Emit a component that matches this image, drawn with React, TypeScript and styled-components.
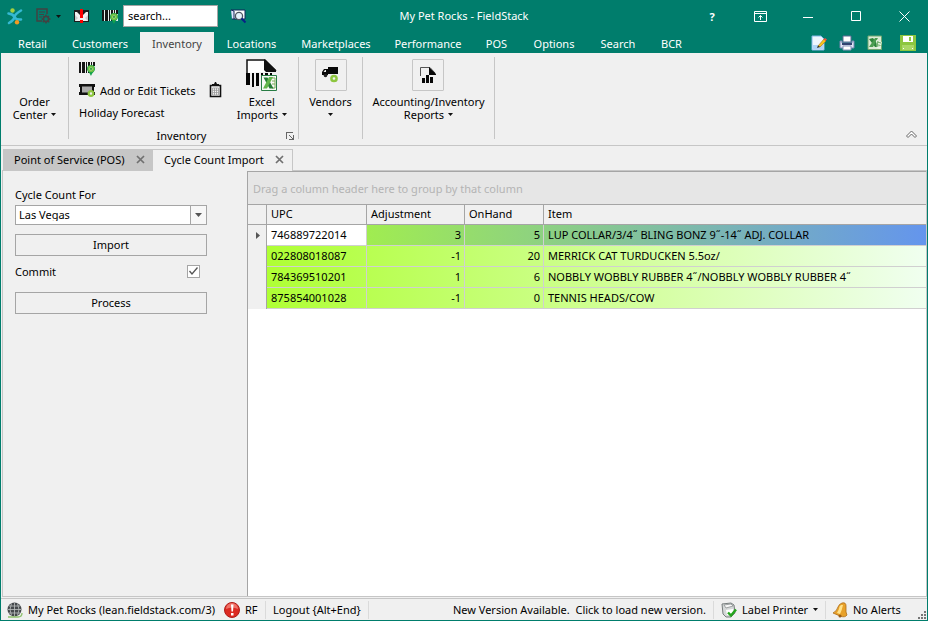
import React from "react";
import styled, { createGlobalStyle, css } from "styled-components";

const teal = "#007d6c";
const face = "#f0f0f0";
const line = "#c6c6c6";
const edge = "#a5a5a5";

const GlobalStyle = createGlobalStyle`
  * { box-sizing: border-box; }
  body { margin: 0; }
  body, button, input, select {
    font-family: "Noto Sans", "Open Sans", sans-serif;
    font-size: 11px;
    line-height: 13px;
    color: #000;
  }
  button { margin: 0; padding: 0; border: 0; background: none; }
  svg { display: block; flex: none; }
`;

const Window = styled.div`
  display: flex;
  flex-direction: column;
  min-height: 100vh;
  background: ${face};
  border: 1px solid ${teal};
  border-top: 0;
`;

const TitleBar = styled.header`
  display: grid;
  grid-template-columns: 1fr auto 1fr;
  align-items: center;
  height: 32px;
  margin: 0 -1px;
  background: ${teal};
  color: #fff;
`;

const QuickAccess = styled.div`
  display: flex;
  align-items: center;
  padding-left: 7px;
`;

const ToolButton = styled.button<{ $gap?: number }>`
  display: flex;
  align-items: center;
  gap: 5px;
  margin-right: ${(p) => p.$gap ?? 0}px;
`;

const SearchBox = styled.input`
  width: 95px;
  height: 22px;
  margin-right: 12px;
  padding: 0 4px 1px;
  border: 1px solid ${edge};
  border-radius: 0;
  background: #fff;
  outline: 0;
  &::placeholder { color: #000; opacity: 1; }
`;

const Title = styled.h1`
  margin: 0;
  padding-bottom: 2px;
  font-size: 11px;
  font-weight: 400;
`;

const WindowButtons = styled.div`
  display: flex;
  justify-content: flex-end;
`;

const WindowButton = styled.button`
  display: flex;
  align-items: center;
  justify-content: center;
  width: 48px;
  height: 32px;
  color: #fff;
  font-weight: 700;
`;

const MenuBar = styled.nav`
  display: flex;
  height: 21px;
  margin: 0 -1px;
  padding: 0 12px 0 5px;
  background: ${teal};
`;

const MenuTab = styled.button<{ $width: number; $active?: boolean }>`
  width: ${(p) => p.$width}px;
  flex: none;
  padding-top: 2px;
  white-space: nowrap;
  color: ${(p) => (p.$active ? "#444" : "#fff")};
  background: ${(p) => (p.$active ? face : "transparent")};
`;

const MenuTools = styled.div`
  display: flex;
  align-items: center;
  gap: 12px;
  margin-left: auto;
  button:last-child { margin-left: 5px; }
`;

const Ribbon = styled.section`
  display: flex;
  align-items: stretch;
  height: 93px;
  padding: 4px 0 6px;
  border-bottom: 1px solid ${line};
`;

const Group = styled.div<{ $width: number }>`
  display: flex;
  justify-content: center;
  width: ${(p) => p.$width}px;
  border-right: 1px solid ${line};
`;

const InventoryGroup = styled(Group)`
  flex-direction: column;
  justify-content: space-between;
`;

const GroupBody = styled.div`
  display: flex;
  padding: 0 11px 0 10px;
`;

const CommandList = styled.div`
  display: flex;
  flex-direction: column;
  width: 130px;
`;

const Command = styled.button`
  display: flex;
  align-items: center;
  gap: 5px;
  height: 22px;
  white-space: nowrap;
`;

const ClipButton = styled.button`
  align-self: flex-start;
  margin-top: 25px;
`;

const GroupFooter = styled.div`
  display: grid;
  grid-template-columns: 1fr auto 1fr;
  align-items: center;
  height: 10px;
  padding-right: 4px;
  button { justify-self: end; }
`;

const BigButton = styled.button<{ $push?: boolean }>`
  display: flex;
  flex-direction: column;
  align-items: center;
  justify-content: flex-start;
  white-space: nowrap;
  ${(p) => p.$push && css`margin-left: auto;`}
`;

const IconSlot = styled.span<{ $framed?: boolean }>`
  display: flex;
  align-items: center;
  justify-content: center;
  width: 32px;
  height: 32px;
  margin: 2px 0 4px;
  border: ${(p) => (p.$framed ? `1px solid ${line}` : "0")};
  border-radius: 1px;
`;

const WithCaret = styled.span`
  display: flex;
  align-items: center;
  justify-content: center;
  gap: 4px;
  min-height: 13px;
`;

const Collapse = styled.button`
  align-self: flex-end;
  margin: 0 9px 0 auto;
`;

const DocTabs = styled.div`
  display: flex;
  height: 24px;
  padding: 3px 0 0 2px;
`;

const DocTab = styled.div<{ $active?: boolean; $width: number }>`
  display: flex;
  align-items: center;
  justify-content: space-between;
  width: ${(p) => p.$width}px;
  padding: 0 7px 1px 10px;
  white-space: nowrap;
  border: 1px solid ${line};
  border-bottom: 0;
  background: ${(p) => (p.$active ? face : line)};
  ${(p) => p.$active && css`
    border-left: 0;
    margin-bottom: -1px;
    padding: 0 8px 2px 11px;
    z-index: 1;
  `}
`;

const Workspace = styled.main`
  display: flex;
  flex: 1;
  margin: 0 0 1px 1px;
  border: 1px solid ${line};
`;

const Form = styled.form`
  display: flex;
  flex-direction: column;
  width: 244px;
  padding: 17px 40px 0 12px;
`;

const FieldLabel = styled.label`
  line-height: 13px;
`;

const SelectWrap = styled.div`
  display: grid;
  grid-template-columns: 1fr 16px;
  height: 20px;
  margin: 4px 0 9px;
  border: 1px solid ${edge};
`;

const Select = styled.select`
  grid-area: 1 / 1 / 2 / 3;
  width: 100%;
  appearance: none;
  border: 0;
  border-radius: 0;
  outline: 0;
  padding: 0 20px 2px 3px;
  background: #fff;
`;

const SelectArrow = styled.span`
  grid-area: 1 / 2;
  display: flex;
  align-items: center;
  justify-content: center;
  border-left: 1px solid ${edge};
  background: #f7f7f7;
  pointer-events: none;
`;

const FormButton = styled.button`
  height: 22px;
  padding-bottom: 2px;
  border: 1px solid ${edge};
  background: ${face};
`;

const CheckRow = styled.div`
  display: flex;
  align-items: center;
  justify-content: space-between;
  height: 36px;
  padding: 0 7px 6px 0;
`;

const CheckWrap = styled.span`
  display: grid;
  width: 13px;
  height: 13px;
  place-items: center;
  svg { grid-area: 1 / 1; pointer-events: none; }
`;

const CheckBox = styled.input`
  grid-area: 1 / 1;
  appearance: none;
  width: 13px;
  height: 13px;
  margin: 0;
  border: 1px solid ${edge};
  background: #fff;
`;

const GridPanel = styled.section`
  flex: 1;
  min-width: 0;
  border-top: 1px solid ${edge};
  border-left: 1px solid ${edge};
  background: #fff;
`;

const GroupDrop = styled.div`
  height: 33px;
  padding: 10px 5px;
  border-bottom: 1px solid ${edge};
  background: #e6e6e6;
  color: #b4b4b4;
`;

const Table = styled.table`
  width: 100%;
  table-layout: fixed;
  border-collapse: separate;
  border-spacing: 0;
`;

const Head = styled.th<{ $width?: number }>`
  ${(p) => p.$width && css`width: ${p.$width}px;`}
  height: 20px;
  padding: 0 4px 2px;
  text-align: left;
  font-weight: 400;
  background: ${face};
  border-bottom: 1px solid ${edge};
  border-right: 1px solid ${edge};
  &:last-child { border-right: 0; }
`;

const Row = styled.tr<{ $selected?: boolean }>`
  background: linear-gradient(to right, #adff2f, ${(p) => (p.$selected ? "#6495ed" : "#f0fff0")});
`;

const Cell = styled.td<{ $right?: boolean; $focused?: boolean }>`
  height: 21px;
  padding: 0 3px 2px 4px;
  white-space: nowrap;
  text-align: ${(p) => (p.$right ? "right" : "left")};
  border-bottom: 1px solid #d0d0d0;
  border-right: 1px solid #d0d0d0;
  ${(p) => p.$focused && css`background: #fff;`}
  &:last-child { border-right: 0; }
`;

const Marker = styled.td`
  height: 21px;
  padding: 0 7px 0 8px;
  background: ${face};
  border-right: 1px solid ${edge};
`;

const StatusBar = styled.footer`
  display: flex;
  align-items: center;
  height: 22px;
  border-top: 1px solid ${line};
  white-space: nowrap;
`;

const StatusItem = styled.button<{ $width?: number; $ruled?: boolean; $end?: boolean }>`
  display: flex;
  align-items: center;
  gap: 5px;
  height: 18px;
  padding: 0 7px;
  ${(p) => p.$width && css`width: ${p.$width}px;`}
  ${(p) => p.$ruled && css`border-right: 1px solid #dadada;`}
  ${(p) => p.$end && css`margin-left: auto;`}
`;

const SiteItem = styled(StatusItem)`
  padding: 0 0 0 6px;
`;

const Grip = styled.span`
  align-self: flex-end;
  margin: 0 1px 1px 0;
`;

const Caret = ({ color = "#111", size = 5 }: { color?: string; size?: number }) => (
  <svg width={size} height={size > 5 ? 4 : 3} viewBox="0 0 5 3" preserveAspectRatio="none" aria-hidden="true">
    <path d="M0 0h5L2.5 3z" fill={color} />
  </svg>
);

const Cross = () => (
  <svg width="9" height="9" viewBox="0 0 9 9" aria-hidden="true">
    <path d="M1 1l7 7M8 1l-7 7" stroke="#707070" strokeWidth="1.7" />
  </svg>
);

const Logo = () => (
  <svg width="16" height="17" viewBox="0 0 16 17">
    <path d="M14 2.500Q8 6 7.500 9T2 15M1.500 5.500Q6 6 7.500 9T14 11.500" stroke="#35b9d3" strokeWidth="2.600" fill="none" strokeLinecap="round" />
    <circle cx="5.500" cy="2.500" r="2.200" fill="#a4cf3f" />
    <circle cx="10" cy="14.300" r="2.200" fill="#f39a21" />
  </svg>
);

const DocGear = () => (
  <svg width="15" height="16" viewBox="0 0 15 16">
    <path d="M11 6V1H1v12h5" fill="none" stroke="#424242" strokeWidth="1.5" />
    <path d="M3 4h6M3 6.5h5M3 9h3" stroke="#424242" strokeWidth="1.2" />
    <circle cx="10" cy="11" r="2.6" fill="none" stroke="#424242" strokeWidth="1.7" />
    <path d="M10 6.5v2M10 13.5v2M5.500 11h2M12.500 11h2M7 8l1.200 1.200M12 13l1.200 1.200M13 8l-1.200 1.200M8 13l-1.200 1.200" stroke="#424242" strokeWidth="1.500" />
  </svg>
);

const Mail = () => (
  <svg width="16" height="14" viewBox="0 0 16 14">
    <path d="M0 1h15v12H0z" fill="#1c1c1c" />
    <path d="M1 3h2l4 4h1l4-4h2v9H1z" fill="#f1f1f1" />
    <path d="M1 12V6l3 3zM14 12V6l-3 3z" fill="#c9cfce" />
    <path d="M6 0h3v9H6zM6 11h3v3H6z" fill="#f00" />
  </svg>
);

const BarcodePin = ({ back = "none" }: { back?: string }) => (
  <svg width="16" height="16" viewBox="0 0 16 16">
    <path d="M0 2h16v11H0z" fill={back} />
    <path d="M0 2h2v11H0zM3 2h3v11H3zM7 2h1v11H7zM9 2h2v11H9zM12 2h1v4h-1zM14 2h2v4h-2z" fill="#151515" />
    <path d="M8 9a4 4 0 0 1 8 0c0 2.500-2.500 3-4 7-1.500-4-4-4.500-4-7z" fill="#12a24a" />
    <circle cx="12" cy="8.800" r="2.500" fill="#dff0c8" stroke="#6fc043" strokeWidth="1.800" />
    <circle cx="12" cy="8.800" r="1.300" fill="#3fa544" />
  </svg>
);

const FindRecord = () => (
  <svg width="17" height="16" viewBox="0 0 17 16">
    <path d="M1 2h14v9H4z" fill="#fff" stroke="#13265b" />
    <path d="M1 2l3 1v8H2" fill="#dce5ff" stroke="#13265b" />
    <circle cx="9" cy="8" r="3.600" fill="#e4f2fc" stroke="#4d5561" strokeWidth="1.300" />
    <path d="M11.500 10.500l4 4" stroke="#081f87" strokeWidth="2" />
  </svg>
);

const EditPage = () => (
  <svg width="16" height="16" viewBox="0 0 16 16">
    <path d="M1 1h9l3 3v11H1z" fill="#edf6ff" stroke="#83b7e8" />
    <path d="M2 10h10v4H2z" fill="#aed4f8" />
    <path d="M7 11l6-7 2 2-6 6z" fill="#f9c51c" stroke="#a66e16" strokeWidth=".6" />
    <path d="M12.500 4.500L14 3l2 1.500L14.500 6z" fill="#ee5140" />
    <path d="M6 13l1-2.500L9 12z" fill="#302b20" />
  </svg>
);

const PrinterIcon = () => (
  <svg width="16" height="16" viewBox="0 0 16 16">
    <path d="M4 1h8v6H4z" fill="#fff" stroke="#5c6b93" />
    <path d="M1 6h2v2h10V6h2v7H1z" fill="#dfe3f3" stroke="#7684b1" />
    <path d="M3 8h10v2H3z" fill="#334371" />
    <path d="M4 11h8v4H4z" fill="#fff" stroke="#8a94bb" />
  </svg>
);

const SheetIcon = () => (
  <svg width="16" height="16" viewBox="0 0 16 16">
    <path d="M1 1h13.500v13.500H1z" fill="#dcebd6" stroke="#6ea86e" />
    <path d="M2 4l4-1 7 9H8z" fill="#2c853a" />
    <path d="M11 3H8L2 12h4z" fill="#4b9d50" />
    <path d="M9 5l6 2-2 7-3-1z" fill="#eef7ea" opacity=".8" />
    <path d="M10 7l4 1M9.500 9.500l4 1M11 6l-1 6" stroke="#6eaf68" />
  </svg>
);

const Floppy = () => (
  <svg width="16" height="16" viewBox="0 0 16 16" shapeRendering="crispEdges">
    <path d="M0 0h15l1 1v15H0z" fill="#8cc63f" />
    <path d="M3 1h10v6H3z" fill="#fff" />
    <path d="M9 2h2v4H9z" fill="#8cc63f" />
    <path d="M2 10h12v5H2z" fill="#a9d765" />
    <path d="M3 13h1v1H3zM12 13h1v1h-1z" fill="#fff" />
  </svg>
);

const TicketIcon = () => (
  <svg width="16" height="14" viewBox="0 0 16 14">
    <path d="M0 1h16v3h-1v5h1v3H0V9h1V4H0z" fill="#111" />
    <path d="M3 3.500h10v6H3z" fill="#aaa" />
    <circle cx="12" cy="10.500" r="2.300" fill="#efefef" stroke="#8dc63f" strokeWidth="2.200" />
  </svg>
);

const Clipboard = () => (
  <svg width="13" height="16" viewBox="0 0 13 16">
    <path d="M1.500 3.500h10v11h-10z" fill="#f6f6f6" stroke="#111" strokeWidth="1.600" />
    <path d="M3 2h2l1-2h1l1 2h2v2H3z" fill="#111" />
    <path d="M3.500 6h6v7h-6zM5.500 6v7M7.500 6v7M3.500 8.300h6M3.500 10.600h6" fill="none" stroke="#999" strokeWidth=".8" />
  </svg>
);

const ExcelBarcode = () => (
  <svg width="32" height="32" viewBox="0 0 32 32">
    <path d="M1 14V1h18l11 11" fill="#fff" stroke="#111" strokeWidth="1.500" />
    <path d="M18 0l12 11v2H20l-2-2z" fill="#111" />
    <path d="M0 14h4v12H0zM6 14h2v14H6zM10 14h3v13h-3zM15 14h2v3h-2z" fill="#050505" />
    <path d="M19 14h3v2h-3zM24 14h2v2h-2z" fill="#050505" />
    <path d="M15.500 16.500h15v15h-15z" fill="#f8faf6" stroke="#277c43" />
    <path d="M26 19h3v10h-3M26 22h3M26 25h3" fill="none" stroke="#7bad59" />
    <path d="M17.500 18.500h4l6 11h-4z" fill="#247b34" />
    <path d="M27 18h-4l-6 11.500h4z" fill="#62b54a" />
  </svg>
);

const Truck = () => (
  <svg width="17" height="16" viewBox="0 0 17 16">
    <path d="M6 0h10v7H6zM0 5l2-3h4v6H0z" fill="#080808" />
    <path d="M1.500 5L3 3h1v2z" fill="#eee" />
    <circle cx="3.500" cy="8.500" r="1.800" fill="#222" />
    <circle cx="12" cy="11.500" r="2.600" fill="#f3f3f3" stroke="#8dc63f" strokeWidth="2.500" />
  </svg>
);

const ReportIcon = () => (
  <svg width="16" height="17" viewBox="0 0 16 17">
    <path d="M.5 9V.5H10L15 6" fill="none" stroke="#555" />
    <path d="M9 0l7 7v1H9z" fill="#080808" />
    <path d="M2 11h3v5H2zM6 8h3v8H6zM10 10h3v6h-3z" fill="#080808" />
  </svg>
);

const Launcher = () => (
  <svg width="8" height="8" viewBox="0 0 8 8" shapeRendering="crispEdges">
    <path d="M.5 7V.5H7M3 3l4 4M7.500 3v4.500H3" fill="none" stroke="#666" />
  </svg>
);

const Globe = () => (
  <svg width="16" height="16" viewBox="0 0 16 16">
    <circle cx="7.500" cy="7.500" r="7" fill="#45494c" />
    <path d="M1 7.500h13M2 4h11M2 11h11M7.500 1v13M4.500 1.500q-3 6 0 12M10.500 1.500q3 6 0 12" stroke="#bcc0c0" fill="none" strokeWidth=".8" />
    <path d="M1 15h10q4 0 4-4" fill="none" stroke="#8dc06b" strokeWidth="1.300" />
  </svg>
);

const AlertIcon = () => (
  <svg width="16" height="16" viewBox="0 0 16 16">
    <circle cx="8" cy="8" r="7.500" fill="#dc2b22" stroke="#ae1d19" />
    <path d="M2 7a6 6 0 0 1 12 0q-6-3-12 0z" fill="#ef7268" />
    <path d="M7 2.500h2.500L9 9.500H7.500zM7 11h2.500v2.500H7z" fill="#fff" />
  </svg>
);

const LabelPrinterIcon = () => (
  <svg width="16" height="16" viewBox="0 0 16 16">
    <path d="M1 2l9-1 3 2 1 8-4 4H5L2 12z" fill="#d5d8d8" stroke="#777d7d" />
    <path d="M3 3l7-1 2 2-7 2z" fill="#f8f8f8" stroke="#8b9191" strokeWidth=".8" />
    <path d="M5 8l7-1v6H6z" fill="#fff" />
    <path d="M7 10.500l3 3 5-6" fill="none" stroke="#24a51d" strokeWidth="2.400" />
  </svg>
);

const Bell = () => (
  <svg width="15" height="16" viewBox="0 0 15 16">
    <path d="M9 1q4-1 4 3v6l1 3q-2 3-7 1l-7-3q4-2 5-6 1-3 4-4z" fill="#e8a12a" stroke="#ad6c17" strokeWidth=".8" />
    <path d="M8 3q-2 1-2 4l-2 4 3 1q2-4 3-9z" fill="#ffe28a" />
    <circle cx="7" cy="14" r="1.500" fill="#9a5b14" />
  </svg>
);

const menu = [
  { name: "Retail", width: 55 },
  { name: "Customers", width: 80 },
  { name: "Inventory", width: 74 },
  { name: "Locations", width: 75 },
  { name: "Marketplaces", width: 94 },
  { name: "Performance", width: 90 },
  { name: "POS", width: 47 },
  { name: "Options", width: 68 },
  { name: "Search", width: 60 },
  { name: "BCR", width: 47 },
];

const rows = [
  { upc: "746889722014", adj: 3, onHand: 5, item: "LUP COLLAR/3/4˝ BLING BONZ 9˝-14˝ ADJ. COLLAR" },
  { upc: "022808018087", adj: -1, onHand: 20, item: "MERRICK CAT TURDUCKEN 5.5oz/" },
  { upc: "784369510201", adj: 1, onHand: 6, item: "NOBBLY WOBBLY RUBBER 4˝/NOBBLY WOBBLY RUBBER 4˝" },
  { upc: "875854001028", adj: -1, onHand: 0, item: "TENNIS HEADS/COW" },
];

export default function App() {
  return (
    <>
      <GlobalStyle />
      <Window>
        <TitleBar>
          <QuickAccess>
            <ToolButton $gap={13} aria-label="Application"><Logo /></ToolButton>
            <ToolButton $gap={13} aria-label="Reports"><DocGear /><Caret /></ToolButton>
            <ToolButton $gap={12} aria-label="Messages"><Mail /></ToolButton>
            <ToolButton $gap={5} aria-label="Find product"><BarcodePin back="#e6efee" /></ToolButton>
            <SearchBox placeholder="search..." aria-label="Search" />
            <ToolButton aria-label="Look up"><FindRecord /></ToolButton>
          </QuickAccess>
          <Title>My Pet Rocks - FieldStack</Title>
          <WindowButtons>
            <WindowButton>?</WindowButton>
            <WindowButton aria-label="Ribbon display">
              <svg width="13" height="11" viewBox="0 0 13 11" fill="none" stroke="#fff">
                <path d="M.5.5h12v10H.5zM.5 2.500h12M6.500 9V4.500M4.500 6.500l2-2 2 2" />
              </svg>
            </WindowButton>
            <WindowButton aria-label="Minimize">
              <svg width="10" height="3" viewBox="0 0 10 3"><path d="M0 2.500h10" stroke="#fff" /></svg>
            </WindowButton>
            <WindowButton aria-label="Maximize">
              <svg width="10" height="10" viewBox="0 0 10 10"><path d="M.5.5h9v9h-9z" fill="none" stroke="#fff" /></svg>
            </WindowButton>
            <WindowButton aria-label="Close">
              <svg width="11" height="11" viewBox="0 0 11 11"><path d="M.5.5l10 10M10.500.5l-10 10" stroke="#fff" /></svg>
            </WindowButton>
          </WindowButtons>
        </TitleBar>

        <MenuBar>
          {menu.map((m) => (
            <MenuTab key={m.name} $width={m.width} $active={m.name === "Inventory"}>{m.name}</MenuTab>
          ))}
          <MenuTools>
            <ToolButton aria-label="Edit"><EditPage /></ToolButton>
            <ToolButton aria-label="Print"><PrinterIcon /></ToolButton>
            <ToolButton aria-label="Export"><SheetIcon /></ToolButton>
            <ToolButton aria-label="Save"><Floppy /></ToolButton>
          </MenuTools>
        </MenuBar>

        <Ribbon>
          <Group $width={68}>
            <BigButton>
              <IconSlot />
              <span>Order</span>
              <WithCaret>Center <Caret /></WithCaret>
            </BigButton>
          </Group>
          <InventoryGroup $width={230}>
            <GroupBody>
              <CommandList>
                <Command aria-label="Product lookup"><BarcodePin /></Command>
                <Command><TicketIcon />Add or Edit Tickets</Command>
                <Command>Holiday Forecast</Command>
              </CommandList>
              <ClipButton aria-label="Count sheet"><Clipboard /></ClipButton>
              <BigButton $push>
                <IconSlot><ExcelBarcode /></IconSlot>
                <span>Excel</span>
                <WithCaret>Imports <Caret /></WithCaret>
              </BigButton>
            </GroupBody>
            <GroupFooter>
              <span />
              <span>Inventory</span>
              <button aria-label="Inventory settings"><Launcher /></button>
            </GroupFooter>
          </InventoryGroup>
          <Group $width={64}>
            <BigButton>
              <IconSlot $framed><Truck /></IconSlot>
              <span>Vendors</span>
              <WithCaret><Caret /></WithCaret>
            </BigButton>
          </Group>
          <Group $width={132}>
            <BigButton>
              <IconSlot $framed><ReportIcon /></IconSlot>
              <span>Accounting/Inventory</span>
              <WithCaret>Reports <Caret /></WithCaret>
            </BigButton>
          </Group>
          <Collapse aria-label="Collapse ribbon">
            <svg width="13" height="9" viewBox="0 0 13 9">
              <path d="M1.500 6L6.500 1l5 5-1.500 1.500-3.500-3.500L3 7.500z" fill="#fff" stroke="#666" />
            </svg>
          </Collapse>
        </Ribbon>

        <DocTabs>
          <DocTab $width={150}>Point of Service (POS)<button aria-label="Close Point of Service"><Cross /></button></DocTab>
          <DocTab $width={140} $active>Cycle Count Import<button aria-label="Close Cycle Count Import"><Cross /></button></DocTab>
        </DocTabs>

        <Workspace>
          <Form onSubmit={(e) => e.preventDefault()}>
            <FieldLabel htmlFor="store">Cycle Count For</FieldLabel>
            <SelectWrap>
              <Select id="store" defaultValue="Las Vegas"><option>Las Vegas</option></Select>
              <SelectArrow><Caret color="#555" size={7} /></SelectArrow>
            </SelectWrap>
            <FormButton type="button">Import</FormButton>
            <CheckRow>
              <FieldLabel htmlFor="commit">Commit</FieldLabel>
              <CheckWrap>
                <CheckBox id="commit" type="checkbox" defaultChecked />
                <svg width="9" height="8" viewBox="0 0 9 8"><path d="M.5 4l2.500 3L8.500.5" fill="none" stroke="#555" strokeWidth="1.300" /></svg>
              </CheckWrap>
            </CheckRow>
            <FormButton type="submit">Process</FormButton>
          </Form>

          <GridPanel>
            <GroupDrop>Drag a column header here to group by that column</GroupDrop>
            <Table>
              <thead>
                <tr>
                  <Head $width={19} aria-label="Row marker" />
                  <Head $width={100}>UPC</Head>
                  <Head $width={98}>Adjustment</Head>
                  <Head $width={79}>OnHand</Head>
                  <Head>Item</Head>
                </tr>
              </thead>
              <tbody>
                {rows.map((r, i) => (
                  <Row key={r.upc} $selected={i === 0}>
                    <Marker>
                      {i === 0 && <svg width="4" height="7" viewBox="0 0 4 7"><path d="M0 0l4 3.500L0 7z" fill="#555" /></svg>}
                    </Marker>
                    <Cell $focused={i === 0}>{r.upc}</Cell>
                    <Cell $right>{r.adj}</Cell>
                    <Cell $right>{r.onHand}</Cell>
                    <Cell>{r.item}</Cell>
                  </Row>
                ))}
              </tbody>
            </Table>
          </GridPanel>
        </Workspace>

        <StatusBar>
          <SiteItem $width={216}><Globe />My Pet Rocks (lean.fieldstack.com/3)</SiteItem>
          <StatusItem $width={49} $ruled><AlertIcon />RF</StatusItem>
          <StatusItem $width={103} $ruled>Logout {"{Alt+End}"}</StatusItem>
          <StatusItem $ruled $end>New Version Available.&nbsp; Click to load new version.</StatusItem>
          <StatusItem $width={112} $ruled><LabelPrinterIcon />Label Printer<Caret /></StatusItem>
          <StatusItem $width={92}><Bell />No Alerts</StatusItem>
          <Grip>
            <svg width="8" height="8" viewBox="0 0 8 8" shapeRendering="crispEdges">
              <path d="M6 0h2v2H6zM3 3h2v2H3zM6 3h2v2H6zM0 6h2v2H0zM3 6h2v2H3zM6 6h2v2H6z" fill="#777" />
            </svg>
          </Grip>
        </StatusBar>
      </Window>
    </>
  );
}
